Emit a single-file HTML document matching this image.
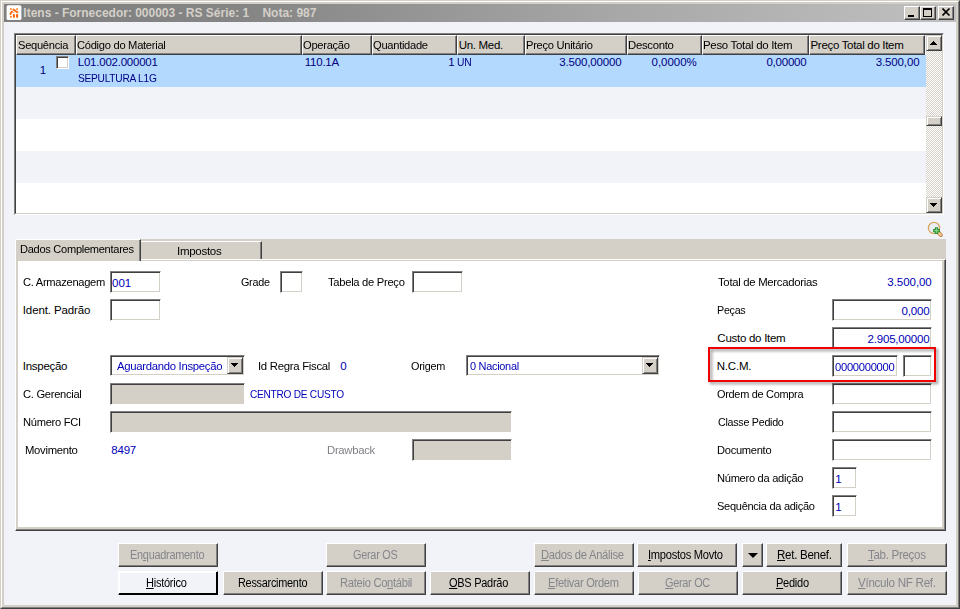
<!DOCTYPE html>
<html><head><meta charset="utf-8"><title>Itens</title>
<style>
*{box-sizing:border-box;margin:0;padding:0}
html,body{width:960px;height:609px;overflow:hidden;background:#d4d0c8}
body{font-family:"Liberation Sans",sans-serif;font-size:11px;color:#000;position:relative}
.a{position:absolute}
.t{position:absolute;white-space:nowrap;line-height:1;display:block;transform-origin:0 0}
.t u{text-decoration:underline;text-underline-offset:1px}
.ttl{font-size:12px;font-weight:bold;color:#d4d0c8}
.h,.c,.l,.v,.g{font-size:11.5px}.b,.bd{font-size:12px}
.h{color:#000}.c{color:#000080}.l{color:#000}.v{color:#0000b8}.g{color:#808088}.b{color:#000}
.bd{color:#85858c}
#win{left:0;top:0;width:960px;height:609px;border:1px solid;border-color:#d4d0c8 #404040 #404040 #d4d0c8}
#win2{left:1px;top:1px;width:958px;height:607px;border:1px solid;border-color:#fff #808080 #808080 #fff}
#title{left:4px;top:4px;width:952px;height:18px;background:linear-gradient(90deg,#808080 0%,#858585 25%,#a8a8a8 65%,#c0c0c0 100%)}
#client{left:4px;top:22px;width:952px;height:583px;background:#f2f3f9}
.tb{position:absolute;top:6px;width:16px;height:14px;background:#d4d0c8;border:1px solid;border-color:#fff #404040 #404040 #fff;box-shadow:inset -1px -1px 0 #808080}
#grid{left:14px;top:33px;width:930px;height:182px;border:1px solid;border-color:#808080 #fff #fff #808080}
#gridin{left:15px;top:34px;width:928px;height:180px;border:1px solid;border-color:#404040 #d4d0c8 #d4d0c8 #404040}
.hc{position:absolute;top:35px;height:20px;background:#d4d0c8;border:1px solid;border-color:#fff #404040 #404040 #fff;box-shadow:inset -1px -1px 0 #808080}
.row{position:absolute;left:16px;width:910px;height:32px}
.sbtn{position:absolute;left:926px;width:16px;height:16px;background:#d4d0c8;border:1px solid;border-color:#d4d0c8 #404040 #404040 #d4d0c8;box-shadow:inset 1px 1px 0 #fff,inset -1px -1px 0 #808080}
.inp{position:absolute;height:22px;background:#fff;border:1px solid;border-color:#808080 #fff #fff #808080;box-shadow:inset 1px 1px 0 #404040,inset -1px -1px 0 #d4d0c8}
.inp.dis{background:#d4d0c8}
.btn{position:absolute;height:24px;width:100px;background:#d4d0c8;border:1px solid;border-color:#fff #404040 #404040 #fff;box-shadow:inset -1px -1px 0 #808080}
.btn.hot{background:#f2f3f9;border-color:#fff #000 #000 #fff;box-shadow:inset -1px -1px 0 #000,inset 1px 1px 0 #fff}
.arr{position:absolute;width:0;height:0;border-left:4px solid transparent;border-right:4px solid transparent;border-top:4px solid #000}
</style></head><body>
<div id="win" class="a"></div><div id="win2" class="a"></div>
<div id="title" class="a"></div>
<svg class="a" style="left:6px;top:5px" width="16" height="16" viewBox="0 0 16 16"><rect x="0.6" y="0.2" width="14.8" height="14.9" rx="1.6" fill="#fff"/><circle cx="4.9" cy="3.9" r="1" fill="#ff8a30"/><circle cx="11.1" cy="4" r="1" fill="#ff8a30"/><path d="M7.4 4.4 L11.4 7.3" stroke="#ff6a10" stroke-width="1.9" stroke-linecap="round" fill="none"/><path d="M6 6.6 L4.4 8.9" stroke="#ff6a10" stroke-width="1.9" stroke-linecap="round" fill="none"/><rect x="6.9" y="9" width="1.9" height="3.8" rx=".7" fill="#ff5a00"/><rect x="10.1" y="9" width="2" height="3.8" rx=".7" fill="#ff5a00"/><rect x="3.9" y="11" width="2" height="1.8" rx=".7" fill="#ff7a20"/><circle cx="7.9" cy="7.6" r=".6" fill="#ffa060"/></svg>
<div class="tb" style="left:904px"><div class="a" style="left:3px;top:8px;width:6px;height:2px;background:#000"></div></div>
<div class="tb" style="left:920px"><div class="a" style="left:2px;top:1px;width:9px;height:9px;border:1px solid #000;border-top-width:2px"></div></div>
<div class="tb" style="left:938px"><svg class="a" style="left:3px;top:1px" width="9" height="8" viewBox="0 0 9 8"><path d="M0.5 0.5 L7.5 7.5 M7.5 0.5 L0.5 7.5" stroke="#000" stroke-width="1.6" fill="none"/></svg></div>
<div id="client" class="a"></div>
<!-- grid -->
<div id="grid" class="a"></div><div id="gridin" class="a"></div>
<div class="row" style="top:55px;background:#b3d9ff"></div>
<div class="row" style="top:87px;background:#f2f3f9"></div>
<div class="row" style="top:119px;background:#fff"></div>
<div class="row" style="top:151px;background:#f2f3f9"></div>
<div class="row" style="top:183px;background:#fff;height:30px"></div>
<div class="hc" style="left:16px;width:60px"></div>
<div class="hc" style="left:76px;width:226px"></div>
<div class="hc" style="left:302px;width:70px"></div>
<div class="hc" style="left:372px;width:85px"></div>
<div class="hc" style="left:457px;width:68px"></div>
<div class="hc" style="left:525px;width:102px"></div>
<div class="hc" style="left:627px;width:75px"></div>
<div class="hc" style="left:702px;width:107px"></div>
<div class="hc" style="left:809px;width:116px"></div>
<div class="a" style="left:56px;top:56px;width:13px;height:13px;background:#fff;border:1px solid;border-color:#808080 #fff #fff #808080;box-shadow:inset 1px 1px 0 #404040,inset -1px -1px 0 #d4d0c8"></div>
<!-- scrollbar -->
<div class="a" style="left:926px;top:35px;width:16px;height:178px;background:repeating-conic-gradient(#fff 0 25%,#d4d0c8 0 50%) 0 0/2px 2px"></div>
<div class="sbtn" style="top:35px"><svg class="a" style="left:3px;top:5px" width="7" height="4" viewBox="0 0 7 4" shape-rendering="crispEdges"><path d="M3 0h1v1h-1zM2 1h3v1h-3zM1 2h5v1h-5zM0 3h7v1h-7z" fill="#000"/></svg></div>
<div class="sbtn" style="top:116px;height:10px"></div>
<div class="sbtn" style="top:197px"><svg class="a" style="left:3px;top:5px" width="7" height="4" viewBox="0 0 7 4" shape-rendering="crispEdges"><path d="M0 0h7v1h-7zM1 1h5v1h-5zM2 2h3v1h-3zM3 3h1v1h-1z" fill="#000"/></svg></div>
<!-- magnifier -->
<svg class="a" style="left:926px;top:220px" width="20" height="20" viewBox="0 0 20 20"><path d="M12.4 12.4 L14.8 15" stroke="#c07830" stroke-width="4" stroke-linecap="round"/><path d="M12.4 12.4 L14.7 14.9" stroke="#eccb94" stroke-width="2.4" stroke-linecap="round"/><circle cx="8" cy="8" r="5.6" fill="#e9eef8" stroke="#d9a65c" stroke-width="1.3"/><path d="M10.5 7.2v6.8M7.1 10.6h6.8" stroke="#2f8f33" stroke-width="3.2"/><path d="M10.5 8.3v4.6M8.2 10.6h4.6" stroke="#86d48a" stroke-width="1.2"/></svg>
<!-- tab strip + panel -->
<div class="a" style="left:15px;top:239px;width:931px;height:22px;background:#d4d0c8"></div>
<div class="a" style="left:15px;top:259px;width:931px;height:272px;background:#d4d0c8;border:1px solid;border-color:#fff #404040 #404040 #fff;box-shadow:inset -1px -1px 0 #808080"></div>
<div class="a" style="left:18px;top:261px;width:924px;height:266px;background:#fff"></div>
<div class="a" style="left:15px;top:239px;width:126px;height:22px;background:#d4d0c8;border:1px solid;border-color:#fff #404040 #d4d0c8 #fff;border-bottom:none;box-shadow:inset -1px 0 0 #808080"></div>
<div class="a" style="left:141px;top:241px;width:121px;height:18px;border-top:1px solid #fff;border-right:1px solid #404040;box-shadow:inset -1px 0 0 #808080"></div>
<!-- inputs left -->
<div class="inp" style="left:110px;top:271px;width:51px"></div>
<div class="inp" style="left:110px;top:299px;width:51px"></div>
<div class="inp" style="left:280px;top:271px;width:23px"></div>
<div class="inp" style="left:412px;top:271px;width:51px"></div>
<div class="inp" style="left:110px;top:355px;width:135px;height:21px"></div>
<div class="sbtn" style="left:227px;top:357px;height:17px"><svg class="a" style="left:3px;top:5px" width="7" height="4" viewBox="0 0 7 4" shape-rendering="crispEdges"><path d="M0 0h7v1h-7zM1 1h5v1h-5zM2 2h3v1h-3zM3 3h1v1h-1z" fill="#000"/></svg></div>
<div class="inp" style="left:466px;top:355px;width:194px;height:21px"></div>
<div class="sbtn" style="left:642px;top:357px;height:17px"><svg class="a" style="left:3px;top:5px" width="7" height="4" viewBox="0 0 7 4" shape-rendering="crispEdges"><path d="M0 0h7v1h-7zM1 1h5v1h-5zM2 2h3v1h-3zM3 3h1v1h-1z" fill="#000"/></svg></div>
<div class="inp dis" style="left:110px;top:383px;width:135px"></div>
<div class="inp dis" style="left:110px;top:411px;width:402px"></div>
<div class="inp dis" style="left:412px;top:439px;width:100px"></div>
<!-- inputs right -->
<div class="inp" style="left:832px;top:299px;width:100px"></div>
<div class="inp" style="left:832px;top:327px;width:100px"></div>
<div class="inp" style="left:832px;top:355px;width:66px"></div>
<div class="inp" style="left:903px;top:355px;width:29px"></div>
<div class="inp" style="left:832px;top:383px;width:100px"></div>
<div class="inp" style="left:832px;top:411px;width:100px"></div>
<div class="inp" style="left:832px;top:439px;width:100px"></div>
<div class="inp" style="left:832px;top:467px;width:25px"></div>
<div class="inp" style="left:832px;top:495px;width:25px"></div>
<!-- red highlight -->
<div class="a" style="left:708px;top:347px;width:228px;height:35px;border:2px solid #f00000;filter:drop-shadow(2px 2px 1.5px rgba(0,0,0,.45))"></div>
<!-- buttons -->
<div class="btn" style="left:118px;top:543px"></div>
<div class="btn hot" style="left:118px;top:571px"></div>
<div class="btn" style="left:223px;top:571px"></div>
<div class="btn" style="left:326px;top:543px"></div>
<div class="btn" style="left:326px;top:571px"></div>
<div class="btn" style="left:430px;top:571px"></div>
<div class="btn" style="left:534px;top:543px"></div>
<div class="btn" style="left:534px;top:571px"></div>
<div class="btn" style="left:637px;top:543px"></div>
<div class="btn" style="left:638px;top:571px"></div>
<div class="btn" style="left:742px;top:543px;width:21px"><div class="arr" style="left:5px;top:9px;border-left-width:5px;border-right-width:5px;border-top-width:5px"></div></div>
<div class="btn" style="left:766px;top:543px;width:76px"></div>
<div class="btn" style="left:847px;top:543px"></div>
<div class="btn" style="left:742px;top:571px"></div>
<div class="btn" style="left:847px;top:571px"></div>

<span class="t ttl" id="t0" style="left:23.34px;top:6.54px;letter-spacing:-0.007px">Itens - Fornecedor: 000003 - RS Série: 1&nbsp;&nbsp;&nbsp; Nota: 987</span>
<span class="t h" id="t1" style="left:17.64px;top:39.99px;letter-spacing:-0.300px;transform:scaleX(0.9692)">Sequência</span>
<span class="t h" id="t2" style="left:76.77px;top:39.99px;letter-spacing:-0.300px;transform:scaleX(0.9714)">Código do Material</span>
<span class="t h" id="t3" style="left:303.19px;top:39.99px;letter-spacing:-0.300px;transform:scaleX(0.9710)">Operação</span>
<span class="t h" id="t4" style="left:373.03px;top:39.99px;letter-spacing:-0.300px;transform:scaleX(0.9701)">Quantidade</span>
<span class="t h" id="t5" style="left:458.71px;top:39.99px;letter-spacing:-0.300px">Un. Med.</span>
<span class="t h" id="t6" style="left:526.40px;top:39.99px;letter-spacing:-0.300px;transform:scaleX(0.9694)">Preço Unitário</span>
<span class="t h" id="t7" style="left:628.40px;top:39.99px;letter-spacing:-0.300px;transform:scaleX(0.9874)">Desconto</span>
<span class="t h" id="t8" style="left:703.25px;top:39.99px;letter-spacing:-0.300px;transform:scaleX(0.9964)">Peso Total do Item</span>
<span class="t h" id="t9" style="left:810.50px;top:39.99px;letter-spacing:-0.310px">Preço Total do Item</span>
<span class="t c" id="t10" style="left:39.70px;top:64.99px">1</span>
<span class="t c" id="t11" style="left:77.79px;top:56.99px;letter-spacing:-0.233px">L01.002.000001</span>
<span class="t c" id="t12" style="left:78.35px;top:72.99px;letter-spacing:-0.300px;transform:scaleX(0.8872)">SEPULTURA L1G</span>
<span class="t c" id="t13" style="left:304.81px;top:56.99px;letter-spacing:-0.244px">110.1A</span>
<span class="t c" id="t14" style="left:448.33px;top:56.99px">1</span>
<span class="t c" id="t15" style="left:457.31px;top:56.99px;letter-spacing:-0.300px;transform:scaleX(0.8951)">UN</span>
<span class="t c" id="t16" style="left:559.37px;top:56.99px;letter-spacing:-0.173px">3.500,00000</span>
<span class="t c" id="t17" style="left:651.55px;top:56.99px;letter-spacing:-0.029px">0,0000%</span>
<span class="t c" id="t18" style="left:766.47px;top:56.99px;letter-spacing:-0.244px">0,00000</span>
<span class="t c" id="t19" style="left:875.63px;top:56.99px;letter-spacing:-0.107px">3.500,00</span>
<span class="t l" id="t20" style="left:19.70px;top:243.99px;letter-spacing:-0.300px;transform:scaleX(0.9633)">Dados Complementares</span>
<span class="t l" id="t21" style="left:177.01px;top:245.99px;letter-spacing:-0.300px;transform:scaleX(1.0036)">Impostos</span>
<span class="t l" id="t22" style="left:23.03px;top:276.99px;letter-spacing:-0.300px;transform:scaleX(0.9688)">C. Armazenagem</span>
<span class="t v" id="t23" style="left:112.11px;top:277.99px;letter-spacing:-0.013px">001</span>
<span class="t l" id="t24" style="left:22.77px;top:304.99px;letter-spacing:-0.113px">Ident. Padrão</span>
<span class="t l" id="t25" style="left:241.31px;top:276.99px;letter-spacing:-0.300px;transform:scaleX(0.9390)">Grade</span>
<span class="t l" id="t26" style="left:327.51px;top:276.99px;letter-spacing:-0.300px;transform:scaleX(0.9743)">Tabela de Preço</span>
<span class="t l" id="t27" style="left:22.77px;top:360.99px;letter-spacing:-0.277px">Inspeção</span>
<span class="t v" id="t28" style="left:116.55px;top:360.99px;letter-spacing:-0.300px;transform:scaleX(0.9849)">Aguardando Inspeção</span>
<span class="t l" id="t29" style="left:257.76px;top:360.99px;letter-spacing:-0.300px;transform:scaleX(0.9895)">Id Regra Fiscal</span>
<span class="t v" id="t30" style="left:340.23px;top:360.99px">0</span>
<span class="t l" id="t31" style="left:411.30px;top:360.99px;letter-spacing:-0.300px;transform:scaleX(0.9447)">Origem</span>
<span class="t v" id="t32" style="left:469.69px;top:360.99px;letter-spacing:-0.300px;transform:scaleX(0.9517)">0 Nacional</span>
<span class="t l" id="t33" style="left:23.16px;top:388.99px;letter-spacing:-0.300px;transform:scaleX(0.9707)">C. Gerencial</span>
<span class="t v" id="t34" style="left:249.78px;top:388.99px;letter-spacing:-0.300px;transform:scaleX(0.8810)">CENTRO DE CUSTO</span>
<span class="t l" id="t35" style="left:22.55px;top:416.99px;letter-spacing:-0.300px;transform:scaleX(0.9684)">Número FCI</span>
<span class="t l" id="t36" style="left:24.70px;top:444.99px;letter-spacing:-0.300px;transform:scaleX(0.9817)">Movimento</span>
<span class="t v" id="t37" style="left:111.31px;top:444.99px;letter-spacing:-0.228px">8497</span>
<span class="t g" id="t38" style="left:326.70px;top:444.99px;letter-spacing:-0.300px;transform:scaleX(0.9838)">Drawback</span>
<span class="t l" id="t39" style="left:717.51px;top:276.99px;letter-spacing:-0.300px;transform:scaleX(0.9855)">Total de Mercadorias</span>
<span class="t v" id="t40" style="left:887.37px;top:276.99px;letter-spacing:-0.052px">3.500,00</span>
<span class="t l" id="t41" style="left:717.18px;top:304.99px;letter-spacing:-0.300px;transform:scaleX(0.9341)">Peças</span>
<span class="t v" id="t42" style="left:901.41px;top:305.99px;letter-spacing:-0.114px">0,000</span>
<span class="t l" id="t43" style="left:717.37px;top:332.99px;letter-spacing:-0.271px">Custo do Item</span>
<span class="t v" id="t44" style="left:867.50px;top:333.99px;letter-spacing:-0.187px">2.905,00000</span>
<span class="t l" id="t45" style="left:716.67px;top:360.99px;letter-spacing:-0.185px">N.C.M.</span>
<span class="t v" id="t46" style="left:834.69px;top:361.99px;letter-spacing:-0.300px;transform:scaleX(0.9743)">0000000000</span>
<span class="t l" id="t47" style="left:716.80px;top:388.99px;letter-spacing:-0.300px;transform:scaleX(0.9501)">Ordem de Compra</span>
<span class="t l" id="t48" style="left:717.52px;top:416.99px;letter-spacing:-0.300px;transform:scaleX(0.9330)">Classe Pedido</span>
<span class="t l" id="t49" style="left:717.18px;top:444.99px;letter-spacing:-0.300px;transform:scaleX(0.9680)">Documento</span>
<span class="t l" id="t50" style="left:717.18px;top:472.99px;letter-spacing:-0.300px;transform:scaleX(0.9673)">Número da adição</span>
<span class="t v" id="t51" style="left:835.33px;top:473.99px">1</span>
<span class="t l" id="t52" style="left:717.16px;top:500.99px;letter-spacing:-0.300px;transform:scaleX(0.9606)">Sequência da adição</span>
<span class="t v" id="t53" style="left:835.33px;top:501.99px">1</span>
<span class="t bd" id="t54" style="left:129.70px;top:548.54px;letter-spacing:-0.300px;transform:scaleX(0.9107)">En<u>q</u>uadramento</span>
<span class="t b" id="t55" style="left:146.40px;top:576.54px;letter-spacing:-0.300px;transform:scaleX(0.9212)"><u>H</u>istórico</span>
<span class="t b" id="t56" style="left:237.51px;top:576.54px;letter-spacing:-0.300px;transform:scaleX(0.9089)">Ressarcimento</span>
<span class="t bd" id="t57" style="left:353.47px;top:548.54px;letter-spacing:-0.300px;transform:scaleX(0.9077)">Gerar OS</span>
<span class="t bd" id="t58" style="left:339.70px;top:576.54px;letter-spacing:-0.300px;transform:scaleX(0.9292)">Rateio Co<u>n</u>tábil</span>
<span class="t b" id="t59" style="left:449.49px;top:576.54px;letter-spacing:-0.300px;transform:scaleX(0.9164)"><u>O</u>BS Padrão</span>
<span class="t bd" id="t60" style="left:541.14px;top:548.54px;letter-spacing:-0.300px;transform:scaleX(0.9339)"><u>D</u>ados de Análise</span>
<span class="t b" id="t61" style="left:648.22px;top:548.54px;letter-spacing:-0.300px;transform:scaleX(0.9289)"><u>I</u>mpostos Movto</span>
<span class="t bd" id="t62" style="left:547.51px;top:576.54px;letter-spacing:-0.300px;transform:scaleX(0.9244)"><u>E</u>fetivar Ordem</span>
<span class="t bd" id="t63" style="left:665.03px;top:576.54px;letter-spacing:-0.300px;transform:scaleX(0.9059)"><u>G</u>erar OC</span>
<span class="t b" id="t64" style="left:776.70px;top:548.54px;letter-spacing:-0.300px;transform:scaleX(0.9636)"><u>R</u>et. Benef.</span>
<span class="t bd" id="t65" style="left:867.50px;top:548.54px;letter-spacing:-0.300px;transform:scaleX(0.9590)"><u>T</u>ab. Preços</span>
<span class="t b" id="t66" style="left:776.40px;top:576.54px;letter-spacing:-0.300px;transform:scaleX(0.9208)"><u>P</u>edido</span>
<span class="t bd" id="t67" style="left:857.51px;top:576.54px;letter-spacing:-0.300px;transform:scaleX(0.9691)"><u>V</u>ínculo NF Ref.</span>
</body></html>
